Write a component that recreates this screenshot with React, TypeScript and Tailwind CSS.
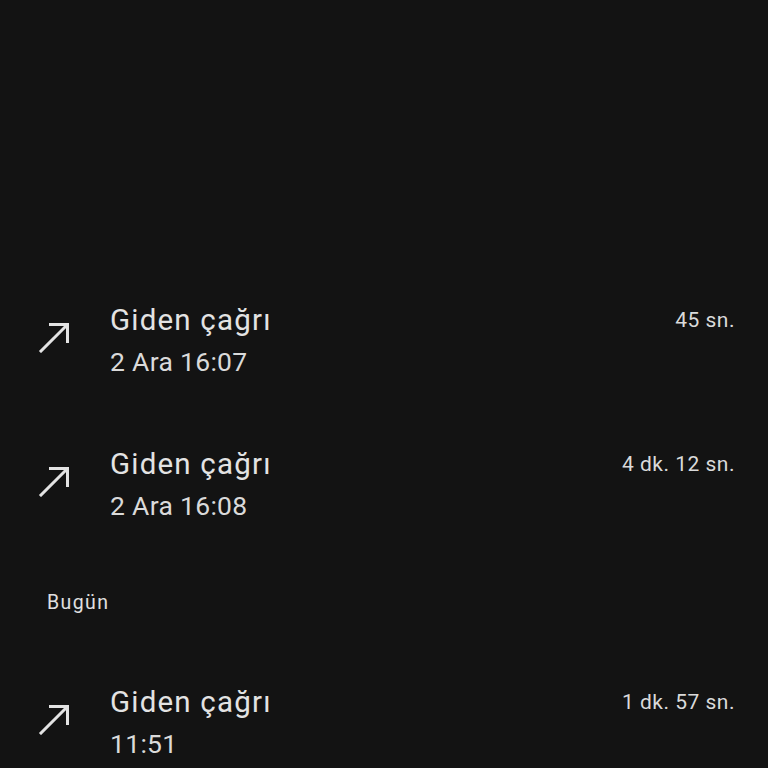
import React from "react";

type Call = { title: string; time: string; duration: string };

const yesterday: Call[] = [
  { title: "Giden çağrı", time: "2 Ara 16:07", duration: "45 sn." },
  { title: "Giden çağrı", time: "2 Ara 16:08", duration: "4 dk. 12 sn." },
];

const today: Call[] = [{ title: "Giden çağrı", time: "11:51", duration: "1 dk. 57 sn." }];

function OutgoingArrow() {
  return (
    <svg width="32" height="32" viewBox="0 0 32 32" fill="none" className="shrink-0">
      <path d="M3 30 L29 4" stroke="#e3e3e3" strokeWidth="3" strokeLinecap="square" />
      <path d="M11 3.5 H29.5 V22" stroke="#e3e3e3" strokeWidth="3" strokeLinecap="butt" />
    </svg>
  );
}

function CallRow({ call }: { call: Call }) {
  return (
    <div className="flex items-center h-[144px] pl-[38px] pr-[33px]">
      <div className="w-[72px] -mt-[6px]">
        <OutgoingArrow />
      </div>
      <div className="flex-1 flex flex-col">
        <div className="flex items-center justify-between">
          <p className="text-[29.5px] leading-[40px] tracking-[1.2px] text-[#e3e3e3]">{call.title}</p>
          <p className="text-[21px] leading-[28px] tracking-[0.5px] text-[#dadada]">{call.duration}</p>
        </div>
        <p className="mt-[4px] text-[26.5px] leading-[36px] tracking-[0.3px] text-[#dadada]">{call.time}</p>
      </div>
    </div>
  );
}

export default function App() {
  return (
    <div
      className="w-full h-screen bg-[#131313] overflow-hidden pt-[268px]"
      style={{ fontFamily: "Roboto, 'Noto Sans', sans-serif" }}
    >
      {yesterday.map((c, i) => (
        <CallRow key={i} call={c} />
      ))}
      <div className="pl-[47px] pt-[34px] pb-[34px]">
        <p className="text-[19.5px] leading-[26px] tracking-[1.4px] text-[#e0e0e0]">Bugün</p>
      </div>
      {today.map((c, i) => (
        <CallRow key={i} call={c} />
      ))}
    </div>
  );
}
